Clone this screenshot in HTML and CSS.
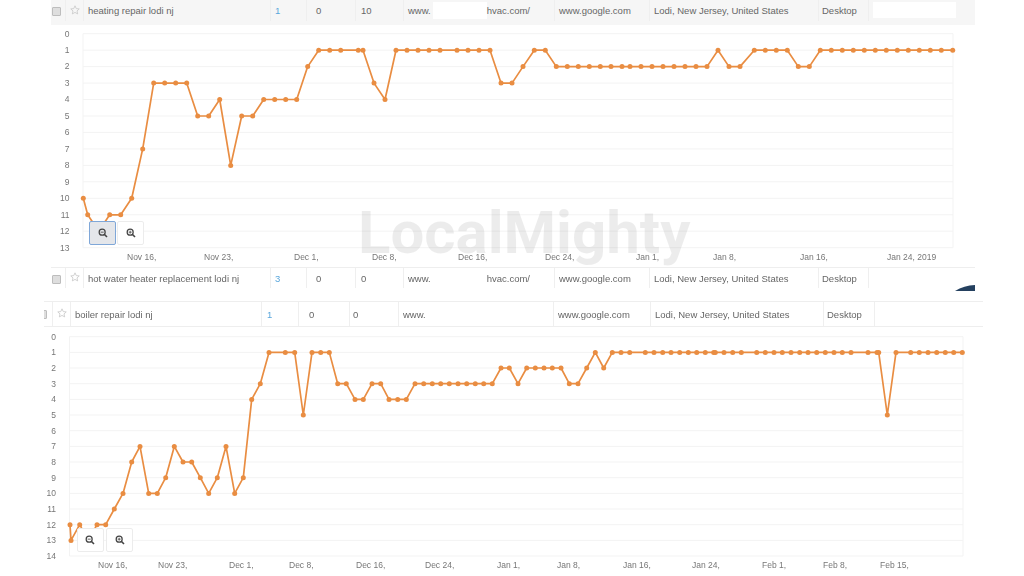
FILE: index.html
```html
<!DOCTYPE html>
<html lang="en">
<head>
<meta charset="utf-8">
<title>Keyword rankings</title>
<link rel="stylesheet" href="styles.css">
</head>
<body>
<svg class="defs" width="0" height="0" aria-hidden="true">
  <defs>
    <marker id="dot" viewBox="-3 -3 6 6" markerWidth="6" markerHeight="6" markerUnits="userSpaceOnUse"><circle r="2.5" fill="#e98d42"/></marker>
    <symbol id="star" viewBox="0 0 12 12"><path d="M6 1l1.5 3.3 3.6.4-2.7 2.4.8 3.6L6 8.9l-3.2 1.8.8-3.6L.9 4.7l3.6-.4z" fill="none" stroke="#c9c9c9" stroke-width="1"/></symbol>
    <symbol id="zoom-out" viewBox="0 0 12 12"><circle cx="5" cy="5" r="3.6" fill="none" stroke="#444" stroke-width="1.5"/><path d="M7.8 7.8l3 3" stroke="#444" stroke-width="1.9"/><path d="M3.2 5h3.6" stroke="#444" stroke-width="1"/></symbol>
    <symbol id="zoom-in" viewBox="0 0 12 12"><circle cx="5" cy="5" r="3.6" fill="none" stroke="#444" stroke-width="1.5"/><path d="M7.8 7.8l3 3" stroke="#444" stroke-width="1.9"/><path d="M3.2 5h3.6M5 3.2v3.6" stroke="#444" stroke-width="1"/></symbol>
  </defs>
</svg>
<main class="page">
  <div class="row row-shaded cols-a">
    <div class="cell"><span class="check"></span></div>
    <div class="cell cell-star"><svg class="star"><use href="#star"/></svg></div>
    <div class="cell pad-4">heating repair lodi nj</div>
    <div class="cell pad-4 rank">1</div>
    <div class="cell pad-9">0</div>
    <div class="cell pad-5">10</div>
    <div class="cell pad-4"><span>www.</span><span class="mask mask-white"></span><span>hvac.com/</span></div>
    <div class="cell pad-4">www.google.com</div>
    <div class="cell pad-4">Lodi, New Jersey, United States</div>
    <div class="cell pad-3">Desktop</div>
    <div class="cell"><span class="note-box"></span></div>
  </div>

  <section class="chart chart-a">
    <svg class="plot" width="1024" height="242" viewBox="0 25 1024 242">
      <g class="grid">
        <path d="M83 33.7H953M83 50.2H953M83 66.6H953M83 83.1H953M83 99.5H953M83 116H953M83 132.4H953M83 148.9H953M83 165.4H953M83 181.8H953M83 198.3H953M83 214.8H953M83 231.2H953M83 247.7H953M83 33.7V247.7M953 33.7V247.7"/>
      </g>
      <g class="y-labels">
        <text x="69.5" y="36.5">0</text><text x="69.5" y="53">1</text><text x="69.5" y="69.4">2</text><text x="69.5" y="85.9">3</text><text x="69.5" y="102.3">4</text><text x="69.5" y="118.8">5</text><text x="69.5" y="135.2">6</text><text x="69.5" y="151.7">7</text><text x="69.5" y="168.2">8</text><text x="69.5" y="184.6">9</text><text x="69.5" y="201.1">10</text><text x="69.5" y="217.6">11</text><text x="69.5" y="234">12</text><text x="69.5" y="250.5">13</text>
      </g>
      <g class="x-labels">
        <text x="127" y="259.5">Nov 16,</text><text x="204" y="259.5">Nov 23,</text><text x="294" y="259.5">Dec 1,</text><text x="372" y="259.5">Dec 8,</text><text x="458" y="259.5">Dec 16,</text><text x="545" y="259.5">Dec 24,</text><text x="636" y="259.5">Jan 1,</text><text x="713" y="259.5">Jan 8,</text><text x="800" y="259.5">Jan 16,</text><text x="887" y="259.5">Jan 24, 2019</text>
      </g>
      <polyline class="series" points="83.3,198.3 87.7,214.8 98.7,231.2 109.7,214.8 120.7,214.8 131.7,198.3 142.7,148.9 153.7,83.1 164.7,83.1 175.7,83.1 186.7,83.1 197.7,116 208.7,116 219.7,99.5 230.7,165.4 241.7,116 252.7,116 263.7,99.5 274.7,99.5 285.7,99.5 296.7,99.5 307.7,66.6 318.7,50.2 329.7,50.2 340.7,50.2 358.3,50.2 363,50.2 374,83.1 385,99.5 396,50.2 407,50.2 418,50.2 429,50.2 440,50.2 457,50.2 468,50.2 479,50.2 490,50.2 501,83.1 512,83.1 523,66.6 534.3,50.2 545.3,50.2 556.3,66.6 567.3,66.6 578.3,66.6 589.3,66.6 600.3,66.6 611,66.6 622,66.6 630,66.6 641,66.6 652,66.6 663,66.6 674,66.6 685,66.6 696,66.6 707,66.6 718,50.2 729,66.6 740,66.6 754.3,50.2 765.3,50.2 776.3,50.2 787.3,50.2 798.3,66.6 809.3,66.6 820.3,50.2 831.3,50.2 842.3,50.2 853.3,50.2 864.3,50.2 875.3,50.2 886.3,50.2 897.3,50.2 908.3,50.2 919.3,50.2 930.3,50.2 941.3,50.2 952.7,50.2"/>
    </svg>
    <div class="zoom-tools tools-a">
      <span class="zoom-btn zoom-btn-active"><svg class="zoom-icon"><use href="#zoom-out"/></svg></span>
      <span class="zoom-btn"><svg class="zoom-icon"><use href="#zoom-in"/></svg></span>
    </div>
    <div class="watermark">LocalMighty</div>
  </section>

  <div class="row row-plain cols-a">
    <div class="cell"><span class="check"></span></div>
    <div class="cell cell-star"><svg class="star"><use href="#star"/></svg></div>
    <div class="cell pad-4">hot water heater replacement lodi nj</div>
    <div class="cell pad-4 rank">3</div>
    <div class="cell pad-9">0</div>
    <div class="cell pad-5">0</div>
    <div class="cell pad-4"><span>www.</span><span class="mask"></span><span>hvac.com/</span></div>
    <div class="cell pad-4">www.google.com</div>
    <div class="cell pad-4">Lodi, New Jersey, United States</div>
    <div class="cell pad-3">Desktop</div>
    <div class="cell">
      <svg class="corner-mark" width="20" height="6" viewBox="0 0 20 6"><path d="M0 6Q9 .5 20 0V6Z" fill="#24405f"/></svg>
    </div>
  </div>

  <div class="row row-bordered cols-b">
    <div class="cell cell-clip"><span class="check check-clipped"></span></div>
    <div class="cell cell-star"><svg class="star"><use href="#star"/></svg></div>
    <div class="cell pad-4">boiler repair lodi nj</div>
    <div class="cell pad-5 rank">1</div>
    <div class="cell pad-10">0</div>
    <div class="cell pad-3">0</div>
    <div class="cell pad-4">www.</div>
    <div class="cell pad-4">www.google.com</div>
    <div class="cell pad-4">Lodi, New Jersey, United States</div>
    <div class="cell pad-3">Desktop</div>
    <div class="cell"></div>
  </div>

  <section class="chart chart-b">
    <svg class="plot" width="1024" height="249" viewBox="0 327 1024 249">
      <g class="grid">
        <path d="M69.5 336.7H963M69.5 352.4H963M69.5 368H963M69.5 383.7H963M69.5 399.4H963M69.5 415H963M69.5 430.7H963M69.5 446.4H963M69.5 462H963M69.5 477.7H963M69.5 493.4H963M69.5 509H963M69.5 524.7H963M69.5 540.4H963M69.5 556H963M69.5 336.7V556M963 336.7V556"/>
      </g>
      <g class="y-labels">
        <text x="56" y="339.5">0</text><text x="56" y="355.2">1</text><text x="56" y="370.8">2</text><text x="56" y="386.5">3</text><text x="56" y="402.2">4</text><text x="56" y="417.8">5</text><text x="56" y="433.5">6</text><text x="56" y="449.2">7</text><text x="56" y="464.8">8</text><text x="56" y="480.5">9</text><text x="56" y="496.2">10</text><text x="56" y="511.8">11</text><text x="56" y="527.5">12</text><text x="56" y="543.2">13</text><text x="56" y="558.8">14</text>
      </g>
      <g class="x-labels">
        <text x="98" y="568">Nov 16,</text><text x="158" y="568">Nov 23,</text><text x="229" y="568">Dec 1,</text><text x="289" y="568">Dec 8,</text><text x="356" y="568">Dec 16,</text><text x="425" y="568">Dec 24,</text><text x="497" y="568">Jan 1,</text><text x="557" y="568">Jan 8,</text><text x="623" y="568">Jan 16,</text><text x="692" y="568">Jan 24,</text><text x="762" y="568">Feb 1,</text><text x="823" y="568">Feb 8,</text><text x="880" y="568">Feb 15,</text>
      </g>
      <polyline class="series" points="70,524.7 71,540.4 79.7,524.7 88.3,540.4 97,524.7 105.7,524.7 114.3,509 123,493.4 131.7,462 140,446.4 148.7,493.4 157.3,493.4 165.7,477.7 174.3,446.4 183,462 191.7,462 200.3,477.7 208.7,493.4 217.3,477.7 226,446.4 234.7,493.4 243.3,477.7 251.7,399.4 260.3,383.7 269,352.4 285.3,352.4 294.7,352.4 303.3,415 312,352.4 320.7,352.4 329.3,352.4 337.7,383.7 346.3,383.7 355,399.4 363.3,399.4 372,383.7 380.7,383.7 389,399.4 397.7,399.4 406.3,399.4 415,383.7 423.7,383.7 432.3,383.7 440.7,383.7 449.3,383.7 458,383.7 466.7,383.7 475.3,383.7 483.7,383.7 492.3,383.7 501,368 509.3,368 518,383.7 526.7,368 535.3,368 544,368 552.3,368 561,368 569.3,383.7 578,383.7 586.7,368 595.3,352.4 603.7,368 612.3,352.4 621,352.4 629.7,352.4 645.3,352.4 654,352.4 662.7,352.4 671,352.4 679.7,352.4 688.3,352.4 696.7,352.4 705.3,352.4 713.7,352.4 715.3,352.4 724,352.4 732.7,352.4 741.3,352.4 756.7,352.4 765.3,352.4 774,352.4 782.3,352.4 791,352.4 799.7,352.4 808,352.4 816.7,352.4 825.3,352.4 834,352.4 842.3,352.4 851,352.4 868,352.4 877,352.4 878.7,352.4 887.3,415 896,352.4 910.7,352.4 919.3,352.4 928,352.4 936.7,352.4 945.3,352.4 953.7,352.4 962.3,352.4"/>
    </svg>
    <div class="zoom-tools tools-b">
      <span class="zoom-btn"><svg class="zoom-icon"><use href="#zoom-out"/></svg></span>
      <span class="zoom-btn"><svg class="zoom-icon"><use href="#zoom-in"/></svg></span>
    </div>
  </section>
</main>
</body>
</html>
```
FILE: styles.css
```css
* { box-sizing: border-box; }
html, body { margin: 0; padding: 0; background: #fff; }
body { width: 1024px; height: 576px; overflow: hidden; }
.defs { display: block; position: absolute; }
.page {
  width: 1024px;
  height: 576px;
  overflow: hidden;
  font-family: "Liberation Sans", Arial, sans-serif;
  color: #666;
  filter: blur(0.35px);
}
.row { display: grid; align-items: stretch; font-size: 9.5px; }
.cols-a {
  margin-left: 51px;
  width: 924px;
  grid-template-columns: 15px 18px 187px 36px 49px 48px 151px 95px 169px 50px 106px;
}
.cols-b {
  margin-left: 44px;
  width: 939px;
  grid-template-columns: 9px 18px 191px 37px 51px 49px 155px 97px 173px 51px 108px;
}
.row-shaded { height: 25px; background: #f6f6f6; padding-bottom: 4px; }
.row-plain { height: 23px; border-top: 1px solid #eeeeee; margin-left: 51px; padding-bottom: 2px; }
.row-bordered { height: 26px; margin-top: 11px; border-top: 1px solid #eeeeee; border-bottom: 1px solid #eeeeee; }
.cell {
  display: flex;
  align-items: center;
  white-space: nowrap;
  position: relative;
  border-right: 1px solid #efefef;
}
.cell:last-child { border-right: 0; }
.pad-3 { padding-left: 3px; }
.pad-4 { padding-left: 4px; }
.pad-5 { padding-left: 5px; }
.pad-9 { padding-left: 9px; }
.pad-10 { padding-left: 10px; }
.rank { color: #5aa7dc; }
.cell-star { justify-content: center; }
.star { width: 10px; height: 10px; margin-top: -2px; }
.check {
  display: block;
  width: 9px;
  height: 9px;
  margin-left: 1px;
  margin-top: 2px;
  background: #dedede;
  border: 1px solid #bdbdbd;
  border-radius: 1px;
}
.cell-clip { overflow: hidden; }
.check-clipped { margin-left: -6px; margin-top: 0; }
.mask { display: block; width: 54px; height: 17px; margin-left: 2px; margin-right: 0; }
.mask-white { background: #fff; }
.note-box { display: block; width: 83px; height: 16px; margin-left: 4px; margin-top: -2px; background: #fff; }
.corner-mark { position: absolute; right: 0; bottom: -3px; }
.chart { position: relative; }
.plot { display: block; }
.grid path { fill: none; stroke: #f3f3f3; stroke-width: 1; }
.y-labels text { font-size: 8.5px; fill: #777; text-anchor: end; font-family: "Liberation Sans", Arial, sans-serif; }
.x-labels text { font-size: 8.5px; fill: #777; font-family: "Liberation Sans", Arial, sans-serif; }
.series {
  fill: none;
  stroke: #e98d42;
  stroke-width: 1.7;
  stroke-linejoin: round;
  marker-start: url(#dot);
  marker-mid: url(#dot);
  marker-end: url(#dot);
}
.zoom-tools { position: absolute; display: flex; }
.tools-a { left: 89px; top: 195.5px; gap: 1px; }
.tools-b { left: 76.5px; top: 201px; gap: 2.5px; }
.zoom-btn {
  display: flex;
  align-items: center;
  justify-content: center;
  width: 27px;
  height: 24px;
  background: #fff;
  border: 1px solid #ececec;
  border-radius: 2px;
}
.zoom-btn-active { background: #e4e6ea; border-color: #7fa7d8; }
.zoom-icon { width: 10px; height: 10px; }
.watermark {
  position: absolute;
  left: 358px;
  top: 173px;
  font-family: Roboto, sans-serif;
  font-weight: 700;
  font-size: 60px;
  line-height: 70px;
  color: rgba(0, 0, 0, 0.075);
  white-space: nowrap;
  pointer-events: none;
}
```
